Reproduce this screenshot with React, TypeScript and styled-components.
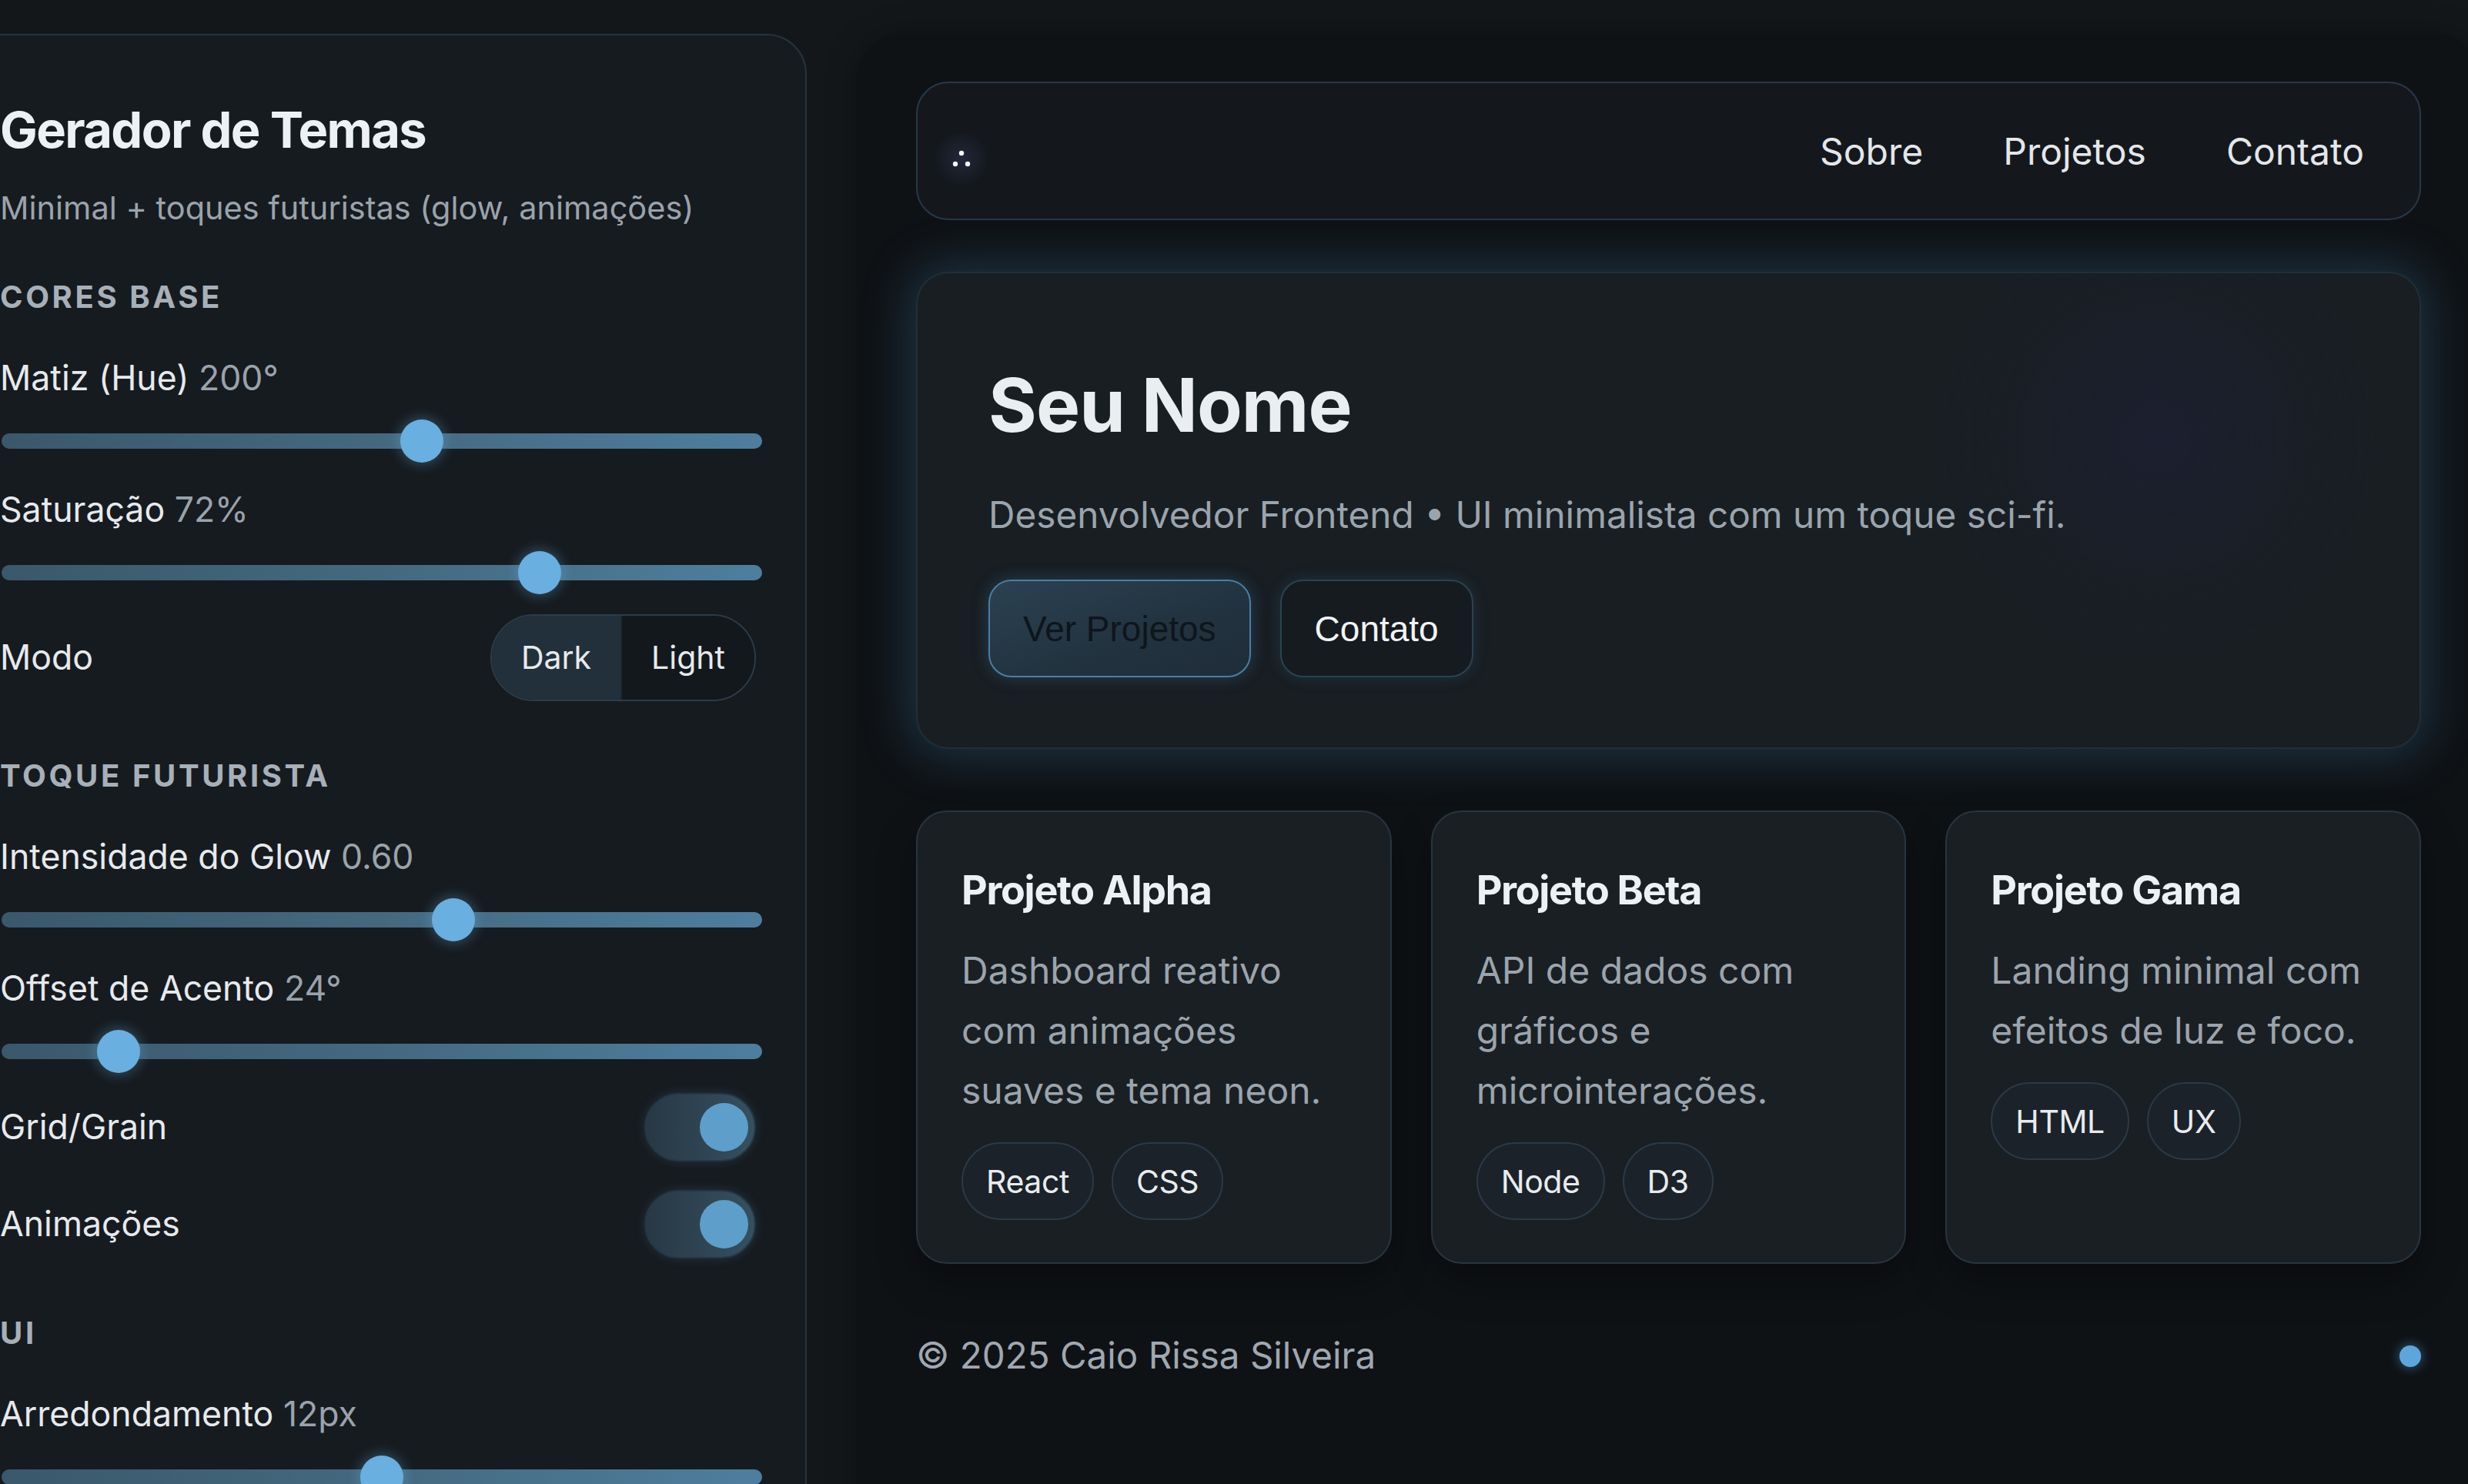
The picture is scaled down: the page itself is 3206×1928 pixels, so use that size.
import React from "react";
import styled, { createGlobalStyle } from "styled-components";

const GlobalStyle = createGlobalStyle`
  html, body { margin: 0; padding: 0; background: #13171a; }
  body {
    font-family: Inter, "Noto Sans", sans-serif;
    color: #e6eaed;
    -webkit-font-smoothing: antialiased;
  }
  * { box-sizing: border-box; }
`;

const Page = styled.div`
  width: 3206px;
  height: 1928px;
  overflow: hidden;
  display: flex;
  align-items: flex-start;
  background: #13171a;
`;

/* ---------- Sidebar ---------- */

const Sidebar = styled.aside`
  flex: 0 0 1106px;
  margin: 44px 0 0 -58px;
  height: 1960px;
  padding: 84px 56px 0 56px;
  border: 2px solid #243441;
  border-radius: 52px;
  background: #161b1f;
  display: flex;
  flex-direction: column;
`;

const PanelTitle = styled.h1`
  margin: 0;
  font-size: 65px;
  font-weight: 700;
  letter-spacing: -0.025em;
  line-height: 1.2;
  color: #eef1f3;
`;

const PanelSubtitle = styled.p`
  margin: 36px 0 0;
  font-size: 41.5px;
  line-height: 1.3;
  color: #9aa3ac;
`;

const Section = styled.section<{ $first?: boolean }>`
  display: flex;
  flex-direction: column;
  gap: 26px;
  margin-top: ${(p) => (p.$first ? 62 : 71)}px;
`;

const SectionTitle = styled.h2`
  margin: 0 0 25px;
  font-size: 40px;
  font-weight: 700;
  letter-spacing: 0.09em;
  text-transform: uppercase;
  color: #a7b0b9;
  line-height: 1.3;
`;

const Field = styled.div`
  display: flex;
  flex-direction: column;
  gap: 24px;
  & + & {
    margin-top: 7px;
  }
`;

const Label = styled.div`
  font-size: 44.6px;
  line-height: 1.3;
  color: #e6eaed;
`;

const Value = styled.span`
  color: #9aa3ac;
`;

const SliderBox = styled.div`
  position: relative;
  height: 56px;
  display: flex;
  align-items: center;
`;

const Rail = styled.div`
  width: 988px;
  height: 20px;
  margin-left: 2px;
  border-radius: 10px;
  background: linear-gradient(90deg, #3a586b 0%, #44697f 50%, #4e7e9e 100%);
`;

const Thumb = styled.div`
  position: absolute;
  top: 0;
  width: 56px;
  height: 56px;
  border-radius: 50%;
  background: #69afe0;
  box-shadow: 0 0 16px 3px rgba(104, 174, 224, 0.32);
`;

const Row = styled.div`
  display: flex;
  align-items: center;
  justify-content: space-between;
  padding-right: 8px;
  & + & {
    margin-top: 11px;
  }
`;

const RowLabel = styled.span`
  font-size: 44.6px;
  color: #e6eaed;
`;

const Segmented = styled.div`
  display: flex;
  height: 113px;
  border: 2px solid #2b3c4a;
  border-radius: 57px;
  overflow: hidden;
`;

const Segment = styled.div<{ $active?: boolean }>`
  display: flex;
  align-items: center;
  padding: 0 38px;
  font-size: 41px;
  color: #e6eaed;
  background: ${(p) => (p.$active ? "#22303b" : "#13181c")};
  & + & {
    border-left: 2px solid #1c2730;
  }
`;

const Toggle = styled.div`
  position: relative;
  width: 145px;
  height: 89px;
  border-radius: 45px;
  border: 2px solid #263645;
  background: linear-gradient(90deg, #283845 0%, #35505f 100%);
  box-shadow: 0 0 14px rgba(90, 160, 210, 0.18);
`;

const Knob = styled.div`
  position: absolute;
  right: 8px;
  top: 11px;
  width: 63px;
  height: 63px;
  border-radius: 50%;
  background: #5e9ecb;
`;

/* ---------- Main ---------- */

const Main = styled.main`
  flex: 0 0 2111px;
  margin: 43px 0 0 64px;
  min-height: 2000px;
  padding: 63px 78px 0;
  background: #0f1215;
  border-radius: 64px;
  box-shadow: 0 0 40px rgba(0, 0, 0, 0.25);
  display: flex;
  flex-direction: column;
`;

const Nav = styled.nav`
  height: 180px;
  display: flex;
  align-items: center;
  justify-content: space-between;
  padding: 0 72px 0 37px;
  border: 2px solid #26394a;
  border-radius: 42px;
  background: #14181c;
`;

const Logo = styled.svg`
  width: 40px;
  height: 40px;
  margin-top: 19px;
  overflow: visible;
`;

const NavLinks = styled.div`
  display: flex;
  gap: 104px;
`;

const NavLink = styled.a`
  font-size: 48px;
  color: #e3e7ea;
  text-decoration: none;
`;

const Hero = styled.section`
  margin-top: 67px;
  height: 620px;
  padding: 116px 92px 88px;
  border: 2px solid rgba(64, 104, 132, 0.22);
  border-radius: 42px;
  background:
    radial-gradient(circle 380px at 1610px 215px, rgba(32, 32, 58, 0.55), rgba(32, 32, 58, 0) 75%),
    #181e22;
  box-shadow: 0 0 60px 8px rgba(60, 120, 165, 0.34);
`;

const HeroTitle = styled.h1`
  margin: 0;
  font-size: 96px;
  font-weight: 700;
  letter-spacing: -0.01em;
  line-height: 1.15;
  color: #eaeef0;
`;

const HeroText = styled.p`
  margin: 55px 0 0;
  font-size: 47.7px;
  line-height: 1.4;
  color: #9ba4ad;
`;

const Buttons = styled.div`
  display: flex;
  gap: 38px;
  margin-top: 50px;
`;

const Button = styled.button<{ $primary?: boolean }>`
  height: 127px;
  padding: 0 43px;
  border-radius: 30px;
  font-family: "Liberation Sans", Arial, sans-serif;
  font-size: 46px;
  cursor: pointer;
  border: 2px solid ${(p) => (p.$primary ? "#4a7ea4" : "#2c4252")};
  color: ${(p) => (p.$primary ? "#0e151b" : "#f1f4f6")};
  background: ${(p) =>
    p.$primary
      ? "linear-gradient(160deg, #2b4252 0%, #22323f 60%, #1f2d39 100%)"
      : "#151b1f"};
  box-shadow: 0 0 22px ${(p) => (p.$primary ? "rgba(80, 150, 200, 0.28)" : "rgba(80, 150, 200, 0.16)")};
`;

const Cards = styled.div`
  display: grid;
  grid-template-columns: repeat(3, 1fr);
  gap: 51px;
  margin-top: 80px;
`;

const Card = styled.article`
  padding: 71px 57px 55px;
  border: 2px solid #28353f;
  border-radius: 40px;
  background: #1a1f23;
  box-shadow: 0 24px 48px rgba(0, 0, 0, 0.35);
  display: flex;
  flex-direction: column;
`;

const CardTitle = styled.h3`
  margin: 0;
  font-size: 52px;
  font-weight: 700;
  letter-spacing: -0.025em;
  line-height: 1.2;
  color: #eef1f3;
`;

const CardText = styled.p`
  margin: 34px 0 0;
  font-size: 48px;
  line-height: 78px;
  color: #9ba4ad;
`;

const Tags = styled.div`
  display: flex;
  gap: 23px;
  margin-top: 28px;
`;

const Tag = styled.span`
  display: inline-flex;
  align-items: center;
  height: 101px;
  padding: 0 30px;
  border-radius: 999px;
  border: 2px solid #2b3a47;
  background: #1b2229;
  font-size: 41px;
  letter-spacing: -0.01em;
  color: #e8ecef;
`;

const Footer = styled.footer`
  display: flex;
  align-items: center;
  justify-content: space-between;
  margin-top: 86px;
`;

const FooterText = styled.span`
  font-size: 47.5px;
  line-height: 1.4;
  color: #9fa8b1;
`;

const Dot = styled.span`
  width: 28px;
  height: 28px;
  border-radius: 50%;
  background: #5ca6dc;
  box-shadow: 0 0 14px 2px rgba(92, 166, 220, 0.4);
`;

/* ---------- Components ---------- */

function Slider({ p }: { p: number }) {
  return (
    <SliderBox>
      <Rail />
      <Thumb style={{ left: `${2 + 932 * p}px` }} />
    </SliderBox>
  );
}

function SliderField({ label, value, p }: { label: string; value: string; p: number }) {
  return (
    <Field>
      <Label>
        {label} <Value>{value}</Value>
      </Label>
      <Slider p={p} />
    </Field>
  );
}

function ToggleRow({ label }: { label: string }) {
  return (
    <Row>
      <RowLabel>{label}</RowLabel>
      <Toggle>
        <Knob />
      </Toggle>
    </Row>
  );
}

const projects = [
  { title: "Projeto Alpha", text: "Dashboard reativo com animações suaves e tema neon.", tags: ["React", "CSS"] },
  { title: "Projeto Beta", text: "API de dados com gráficos e microinterações.", tags: ["Node", "D3"] },
  { title: "Projeto Gama", text: "Landing minimal com efeitos de luz e foco.", tags: ["HTML", "UX"] },
];

export default function App() {
  return (
    <>
      <GlobalStyle />
      <Page>
        <Sidebar>
          <PanelTitle>Gerador de Temas</PanelTitle>
          <PanelSubtitle>Minimal + toques futuristas (glow, animações)</PanelSubtitle>

          <Section $first>
            <SectionTitle>Cores base</SectionTitle>
            <SliderField label="Matiz (Hue)" value="200°" p={200 / 360} />
            <SliderField label="Saturação" value="72%" p={0.72} />
            <Row>
              <RowLabel>Modo</RowLabel>
              <Segmented>
                <Segment $active>Dark</Segment>
                <Segment>Light</Segment>
              </Segmented>
            </Row>
          </Section>

          <Section>
            <SectionTitle>Toque futurista</SectionTitle>
            <SliderField label="Intensidade do Glow" value="0.60" p={0.6} />
            <SliderField label="Offset de Acento" value="24°" p={24 / 180} />
            <ToggleRow label="Grid/Grain" />
            <ToggleRow label="Animações" />
          </Section>

          <Section>
            <SectionTitle>UI</SectionTitle>
            <SliderField label="Arredondamento" value="12px" p={0.5} />
          </Section>
        </Sidebar>

        <Main>
          <Nav>
            <Logo viewBox="0 0 40 40">
              <defs>
                <radialGradient id="logoGlow">
                  <stop offset="0%" stopColor="#2a3150" stopOpacity="0.6" />
                  <stop offset="100%" stopColor="#2a3150" stopOpacity="0" />
                </radialGradient>
              </defs>
              <circle cx="20" cy="20" r="36" fill="url(#logoGlow)" />
              <circle cx="20" cy="13" r="3.2" fill="#f2f4f6" />
              <circle cx="12" cy="27" r="3.2" fill="#f2f4f6" />
              <circle cx="28" cy="27" r="3.2" fill="#f2f4f6" />
            </Logo>
            <NavLinks>
              <NavLink href="#sobre">Sobre</NavLink>
              <NavLink href="#projetos">Projetos</NavLink>
              <NavLink href="#contato">Contato</NavLink>
            </NavLinks>
          </Nav>

          <Hero>
            <HeroTitle>Seu Nome</HeroTitle>
            <HeroText>Desenvolvedor Frontend • UI minimalista com um toque sci-fi.</HeroText>
            <Buttons>
              <Button $primary>Ver Projetos</Button>
              <Button>Contato</Button>
            </Buttons>
          </Hero>

          <Cards>
            {projects.map((pr) => (
              <Card key={pr.title}>
                <CardTitle>{pr.title}</CardTitle>
                <CardText>{pr.text}</CardText>
                <Tags>
                  {pr.tags.map((t) => (
                    <Tag key={t}>{t}</Tag>
                  ))}
                </Tags>
              </Card>
            ))}
          </Cards>

          <Footer>
            <FooterText>© 2025 Caio Rissa Silveira</FooterText>
            <Dot />
          </Footer>
        </Main>
      </Page>
    </>
  );
}
